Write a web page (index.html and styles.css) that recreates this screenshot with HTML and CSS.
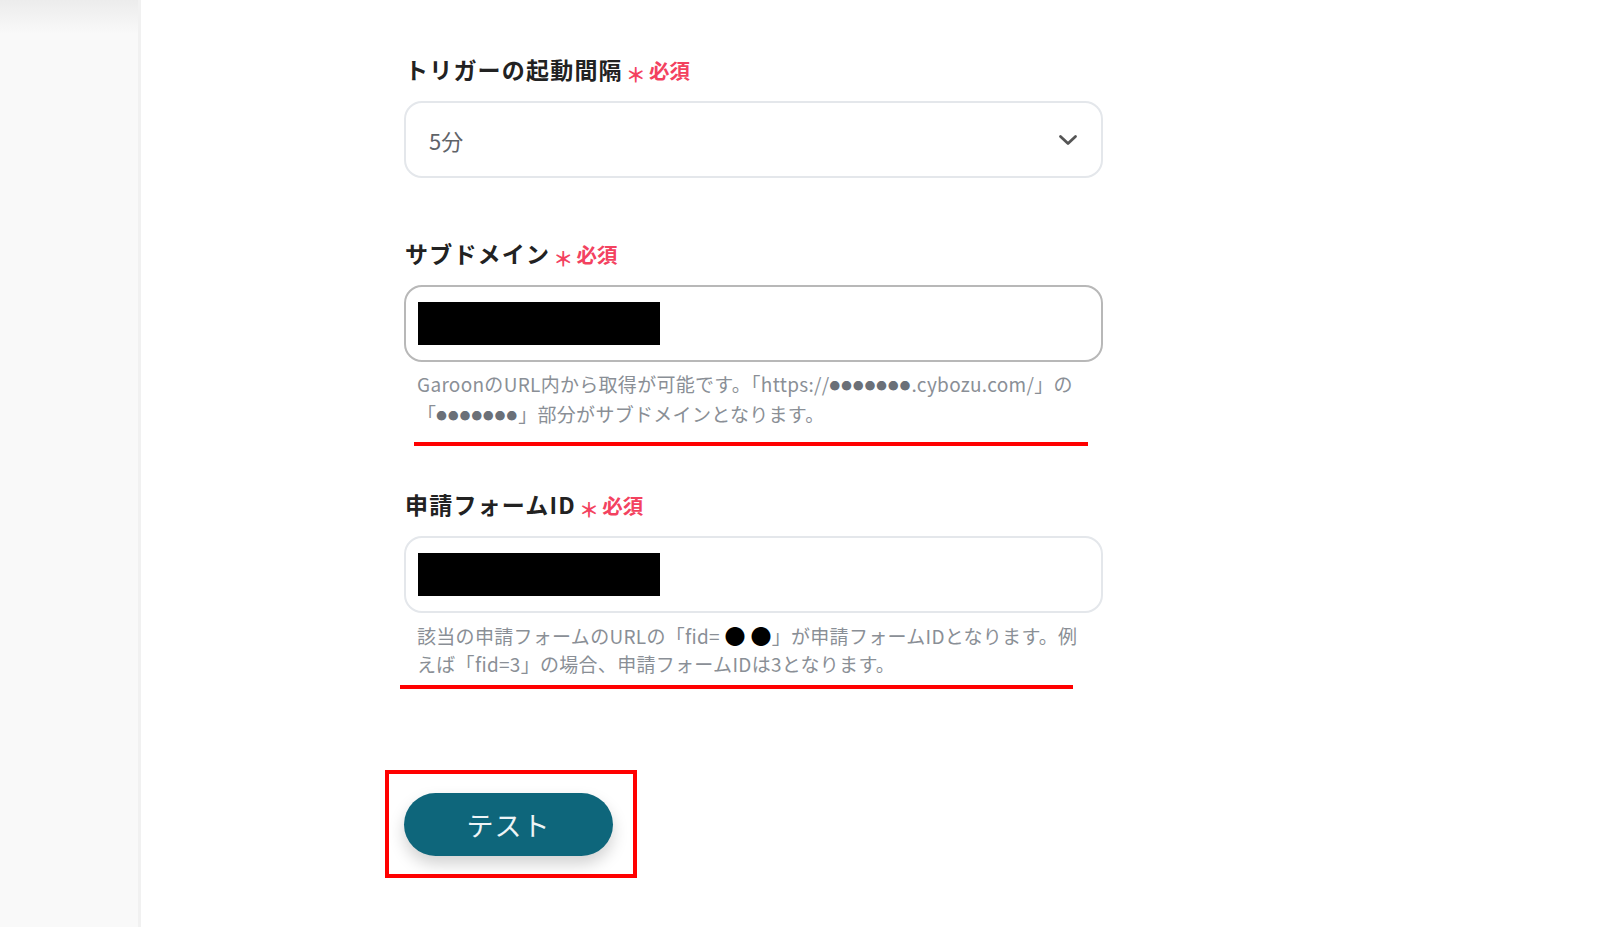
FILE: index.html
```html
<html>
    <head>
        <meta charset="utf-8" />
        <title>トリガー設定</title>
        <link rel="stylesheet" href="styles.css">
    </head>
    <body>
        <div class="page">
            <aside class="sidebar"></aside>

            <main class="content">
                <div class="form">
                    <div class="field first">
                        <div class="label">トリガーの起動間隔<span class="star">＊</span><span class="req">必須</span></div>
                        <div class="select">
                            <span class="value">5分</span>
                            <svg class="chevron" width="20" height="12" viewBox="0 0 20 12">
                                <path d="M2.5 2.5 L10 9.5 L17.5 2.5" fill="none" stroke="#555" stroke-width="2.8" stroke-linecap="round" stroke-linejoin="round"/>
                            </svg>
                        </div>
                    </div>

                    <div class="field second">
                        <div class="label">サブドメイン<span class="star">＊</span><span class="req">必須</span></div>
                        <div class="input dark">
                            <span class="redact"></span>
                        </div>
                        <p class="help">GaroonのURL内から取得が可能です。「https://<span class="dots">●●●●●●●</span>.cybozu.com/」の<br>「<span class="dots">●●●●●●●</span>」部分がサブドメインとなります。</p>
                        <div class="mark one"></div>
                    </div>

                    <div class="field third">
                        <div class="label">申請フォームID<span class="star">＊</span><span class="req">必須</span></div>
                        <div class="input">
                            <span class="redact"></span>
                        </div>
                        <p class="help">該当の申請フォームのURLの「fid= <span class="big-dot">●</span> <span class="big-dot">●</span>」が申請フォームIDとなります。例<br>えば「fid=3」の場合、申請フォームIDは3となります。</p>
                        <div class="mark two"></div>
                    </div>

                    <div class="test-box">
                        <button class="test-btn">テスト</button>
                    </div>
                </div>
            </main>
        </div>
    </body>
</html>
```

FILE: styles.css
```css
html, body {
    margin: 0;
    padding: 0;
    background: #fff;
    font-family: "Noto Sans CJK JP", "Noto Sans", sans-serif;
    color: #222;
}

.page {
    display: flex;
    min-height: 927px;
}

.sidebar {
    width: 138px;
    flex: none;
    background: linear-gradient(#ececec 0, #f9f9f9 34px);
    border-right: 3px solid #f1f1f1;
}

.content {
    flex: 1;
    padding-left: 263px;
}

.form {
    width: 699px;
}

.field.first {
    padding-top: 52px;
}

.field.second {
    padding-top: 58px;
}

.field.third {
    padding-top: 41px;
}

.label {
    font-size: 23px;
    font-weight: 700;
    line-height: 34px;
    height: 34px;
    letter-spacing: 1.2px;
    color: #222;
    margin-bottom: 15px;
    padding-left: 1px;
}

.star {
    color: #f3425f;
    font-size: 20px;
    margin-left: 3px;
    position: relative;
    top: 4px;
}

.req {
    color: #f3425f;
    font-size: 20.5px;
    margin-left: 2px;
    letter-spacing: 0;
}

.select,
.input {
    box-sizing: border-box;
    height: 77px;
    border: 2px solid #e4e7eb;
    border-radius: 18px;
    display: flex;
    align-items: center;
    background: #fff;
}

.select {
    justify-content: space-between;
    padding: 0 23px 0 23px;
}

.select .value {
    font-size: 22px;
    color: #5f6368;
}

.input {
    padding-left: 12px;
}

.input.dark {
    border-color: #b8b8b8;
}

.redact {
    display: block;
    width: 242px;
    height: 43px;
    background: #000;
}

.help {
    margin: 8px 0 0;
    padding-left: 13px;
    font-size: 19px;
    line-height: 28px;
    color: #8a8f96;
    letter-spacing: .3px;
}

.dots {
    font-size: 10.5px;
    letter-spacing: 1.2px;
    color: #6b7078;
    vertical-align: 2px;
}

.big-dot {
    color: #000;
    font-size: 21px;
}

.mark {
    height: 4px;
    background: #f00;
}

.mark.one {
    margin: 12px 15px 0 10px;
}

.mark.two {
    margin: 7px 30px 0 -4px;
}

.test-box {
    margin: 81px 0 0 -19px;
    width: 229px;
    height: 81px;
    border: 4px solid #f00;
    padding: 19px 0 0 15px;
}

.test-btn {
    width: 209px;
    height: 63px;
    border: none;
    border-radius: 32px;
    background: #0e667b;
    color: #eef4f6;
    font-family: "Noto Sans CJK JP", sans-serif;
    font-size: 27px;
    letter-spacing: 1px;
    box-shadow: 0 8px 16px rgba(0,0,0,0.18);
}
```
